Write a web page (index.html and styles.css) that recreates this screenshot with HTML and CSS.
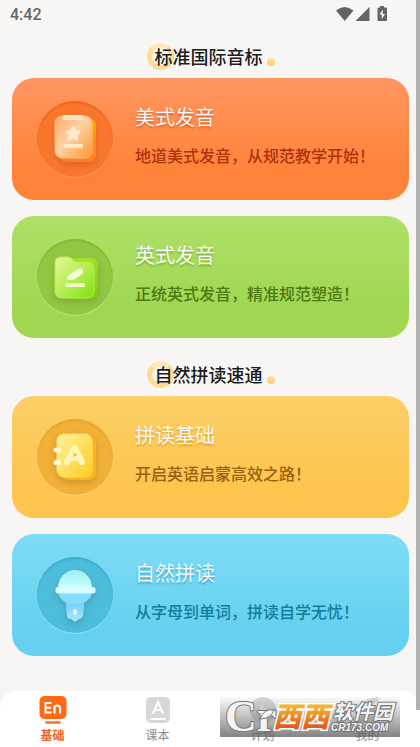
FILE: index.html
```html
<!DOCTYPE html>
<html lang="zh-CN">
<head>
<meta charset="utf-8">
<meta name="viewport" content="width=device-width, initial-scale=1">
<title>基础</title>
<link rel="stylesheet" href="styles.css">
</head>
<body>
<div class="app">
  <header class="status">
    <time>4:42</time>
    <svg class="status-icons" width="52" height="16" viewBox="0 0 52 16" fill="#646464" aria-hidden="true">
      <path d="M0 4.500Q8.500-2.500 17.500 4.500L8.700 15Z"/>
      <path d="M33.500 1V15H19.500Z"/>
      <path d="M44 0h4v1.500h2q1 0 1 1V14q0 1-1 1h-7.500q-1 0-1-1V2.500q0-1 1-1H44Z"/>
      <path d="M46.800 3.500l-3.300 5h2.200V13l3.500-5h-2.400Z" fill="#f7f6f4"/>
    </svg>
  </header>
  <main>
    <section>
      <h2><span class="heading">标准国际音标</span></h2>
      <div class="cards">
        <a class="card orange" href="#us">
          <span class="disc">
            <svg viewBox="0 0 76 76" aria-hidden="true">
              <defs>
                <linearGradient id="o1" x1="0" y1="0" x2="1" y2="1"><stop offset="0" stop-color="#ffa766"/><stop offset=".45" stop-color="#ffd2a3"/><stop offset="1" stop-color="#ff9433"/></linearGradient>
                <linearGradient id="o2" x1="0" y1="0" x2="0" y2="1"><stop offset="0" stop-color="#ffa800"/><stop offset="1" stop-color="#ff7c2c"/></linearGradient>
              </defs>
              <rect x="22" y="17" width="37" height="44" rx="7" fill="url(#o2)"/>
              <rect x="18" y="15" width="37" height="42" rx="7" fill="url(#o1)" stroke="#ffc078" stroke-width="1"/>
              <rect x="25" y="14" width="22" height="5" rx="2.500" fill="#ffe3c2"/>
              <path d="M36 26l2.100 4 4.400.8-3.100 3.300.7 4.400-4.100-2-4.100 2 .7-4.400-3.100-3.300 4.400-.8Z" fill="#ffebcc" stroke="#ffebcc" stroke-width="2" stroke-linejoin="round"/>
              <path d="M28 45h16" stroke="#ffebcc" stroke-width="4" stroke-linecap="round"/>
            </svg>
          </span>
          <span class="copy"><strong>美式发音</strong><span class="sub">地道美式发音，从规范教学开始！</span></span>
        </a>
        <a class="card green" href="#uk">
          <span class="disc">
            <svg viewBox="0 0 76 76" aria-hidden="true">
              <defs>
                <linearGradient id="g1" x1="0" y1="0" x2="1" y2="1"><stop offset="0" stop-color="#e5f59b"/><stop offset=".5" stop-color="#b8ee55"/><stop offset="1" stop-color="#80df12"/></linearGradient>
                <linearGradient id="g2" x1="0" y1="0" x2="0" y2="1"><stop offset="0" stop-color="#a7dd24"/><stop offset="1" stop-color="#70d013"/></linearGradient>
              </defs>
              <path d="M30 19h23q8 0 8 8v25q0 8-8 8H30q-8 0-8-8V27q0-8 8-8Z" fill="url(#g2)"/>
              <path d="M24 18h7c4 0 5 5 9 5h10q7 0 7 7v22q0 7-7 7H25q-7 0-7-7V24q0-6 6-6Z" fill="url(#g1)" stroke="#b4ef4b" stroke-width="1"/>
              <path d="M31 40l1-3 10-6.500q2-.5 3 1t-.5 3L36 40Z" fill="#f3fbd5" stroke="#f3fbd5" stroke-width="2" stroke-linejoin="round"/>
              <path d="M30 46h16" stroke="#effbc8" stroke-width="4" stroke-linecap="round"/>
            </svg>
          </span>
          <span class="copy"><strong>英式发音</strong><span class="sub">正统英式发音，精准规范塑造！</span></span>
        </a>
      </div>
    </section>
    <section>
      <h2><span class="heading">自然拼读速通</span></h2>
      <div class="cards">
        <a class="card yellow" href="#spell">
          <span class="disc">
            <svg viewBox="0 0 76 76" aria-hidden="true">
              <defs>
                <linearGradient id="y1" x1="0" y1="0" x2="1" y2="1"><stop offset="0" stop-color="#fff19a"/><stop offset=".5" stop-color="#ffe060"/><stop offset="1" stop-color="#ffcb1c"/></linearGradient>
              </defs>
              <rect x="24" y="18" width="35" height="43" rx="7" fill="#ffb11f"/>
              <rect x="20" y="15" width="35" height="43" rx="7" fill="url(#y1)" stroke="#ffe477" stroke-width="1"/>
              <path d="M30 43l7.500-14L45 43M34 39h7" fill="none" stroke="#fff8bd" stroke-width="6" stroke-linecap="round" stroke-linejoin="round"/>
              <path d="M36.500 33.500l4 2-4 3Z" fill="#f6c32c"/>
              <path d="M19 31h3M19 43.500h3" stroke="#fff6cf" stroke-width="5" stroke-linecap="round"/>
            </svg>
          </span>
          <span class="copy"><strong>拼读基础</strong><span class="sub">开启英语启蒙高效之路！</span></span>
        </a>
        <a class="card blue" href="#phonics">
          <span class="disc">
            <svg viewBox="0 0 76 76" aria-hidden="true">
              <defs>
                <linearGradient id="b1" x1="0" y1="0" x2="0" y2="1"><stop offset="0" stop-color="#a1eefb"/><stop offset="1" stop-color="#cafffb"/></linearGradient>
                <linearGradient id="b2" x1="0" y1="0" x2="0" y2="1"><stop offset="0" stop-color="#66c7f8"/><stop offset="1" stop-color="#a7e9ff"/></linearGradient>
              </defs>
              <path d="M28 40h20l-2 19q-1 3-4 3l-4 3-4-3q-4 0-4-3Z" fill="url(#b2)"/>
              <path d="M21 36h34q-3 11-17 11T21 36Z" fill="#84daff"/>
              <path d="M21 31a17 18 0 0 1 34 0Z" fill="url(#b1)"/>
              <rect x="18.500" y="30" width="40" height="6.500" rx="2.500" fill="#d7fbff"/>
              <rect x="36" y="52" width="4" height="6" rx="2" fill="#e5fcff"/>
            </svg>
          </span>
          <span class="copy"><strong>自然拼读</strong><span class="sub">从字母到单词，拼读自学无忧！</span></span>
        </a>
      </div>
    </section>
  </main>
  <nav class="tabs">
    <a class="tab active" href="#base">
      <svg width="28" height="28" viewBox="0 0 28 28" aria-hidden="true"><rect x=".5" width="27" height="23" rx="5" fill="#ff6a13"/><path d="M12.500 7H6.500v9.500h6M6.500 11.700h5.500M15.500 17.500V9.500M15.500 12q0-2.500 2.700-2.500T21 12v5.500" fill="none" stroke="#fff" stroke-width="2"/><path d="M7.500 26.500h13" stroke="#ea7434" stroke-width="2.500" stroke-linecap="round"/></svg>
      <span>基础</span>
    </a>
    <a class="tab" href="#book">
      <svg width="28" height="28" viewBox="0 0 28 28" aria-hidden="true"><rect x="2" y="1" width="24" height="26" rx="5" fill="#d8d7d6"/><path d="M9 17.500l5-11.500L19 17.500M10.500 14h7" fill="none" stroke="#fff" stroke-width="2"/><path d="M7 23h14" stroke="#fff" stroke-width="2" stroke-linecap="round"/></svg>
      <span>课本</span>
    </a>
    <a class="tab" href="#plan">
      <svg width="28" height="28" viewBox="0 0 28 28" aria-hidden="true"><circle cx="14" cy="14" r="13" fill="#d8d7d6"/><path d="M11 9l8 5-8 5Z" fill="#eee"/></svg>
      <span>计划</span>
    </a>
    <a class="tab" href="#me">
      <svg width="28" height="28" viewBox="0 0 28 28" aria-hidden="true"><path d="M2 27q0-12 3-17Q10 2 25 1q0 5-6 7 7 6 7 19Z" fill="#d8d7d6"/></svg>
      <span>我的</span>
    </a>
    <svg class="watermark" viewBox="0 0 180 40" role="img">
      <defs>
        <linearGradient id="wx" x1="0" y1="0" x2="0" y2="1"><stop offset=".3" stop-color="#f6b32c"/><stop offset=".8" stop-color="#e35b20"/></linearGradient>
      </defs>
      <text class="wm-cr" x="5" y="34">Cr</text>
      <path d="M40 22q4-11 14-9-3 9-14 9Z" fill="#f4f4f4" stroke="#777" stroke-width="1"/>
      <text class="wm-x" x="53" y="30">西西</text>
      <text class="wm-name" x="113" y="22">软件园</text>
      <text class="wm-url" x="111" y="34">CR173.COM</text>
    </svg>
  </nav>
  <div class="scrollbar"></div>
</div>
</body>
</html>
```
FILE: styles.css
```css
* { box-sizing: border-box; }
body {
  margin: 0;
  background: #f7f6f4;
  color: #1b1b1b;
  font-family: "Noto Sans CJK SC", "Noto Sans", sans-serif;
}
a { color: inherit; text-decoration: none; }
.app {
  position: relative;
  display: flex;
  flex-direction: column;
  min-height: 100vh;
}
.status {
  display: flex;
  justify-content: space-between;
  align-items: center;
  height: 30px;
  padding: 0 32px 0 10px;
  color: #646464;
  font: 500 16px/28px Roboto, sans-serif;
}
.status-icons { margin-bottom: 2px; }
main { flex: 1; padding: 0 11px 0 12px; }
h2 {
  margin: 14px 0 10px;
  padding-right: 4px;
  font-size: 18px;
  font-weight: 500;
  line-height: 24px;
  text-align: center;
}
section + section h2 { margin-top: 24px; }
.heading { position: relative; z-index: 0; }
.heading::before {
  content: "";
  position: absolute;
  z-index: -1;
  left: -8px;
  top: 0;
  width: 17px;
  height: 17px;
  border: 5px solid #fddc93;
  border-top-color: #fee8b8;
  border-radius: 50%;
}
.heading::after {
  content: "";
  position: absolute;
  right: -12px;
  bottom: 3px;
  width: 8px;
  height: 8px;
  border-radius: 50%;
  background: linear-gradient(#fee2a0, #fdc870);
}
.cards { display: grid; gap: 16px; }
.card {
  display: flex;
  align-items: center;
  gap: 22px;
  height: 122px;
  padding: 0 25px;
  border-radius: 22px;
}
.disc {
  flex: none;
  width: 76px;
  height: 76px;
  border-radius: 50%;
}
.disc svg { display: block; filter: drop-shadow(0 3px 3px rgba(80, 40, 0, .2)); }
.copy { display: flex; flex-direction: column; gap: 12px; padding-bottom: 8px; }
.copy strong {
  color: #fff;
  font-size: 20px;
  font-weight: 350;
  line-height: 28px;
}
.sub { font-size: 16px; font-weight: 500; line-height: 24px; white-space: nowrap; }
.orange { background: linear-gradient(#ff9661, #ff8238 80%); color: #ae330b; }
.orange .disc { background: #fb762d; box-shadow: inset 0 2px 2px #ed671f, 0 1px 1px #ff9d66; }
.orange strong { text-shadow: 0 2px 2px #d9652c; }
.green { background: linear-gradient(#afe068, #a0d650 80%); color: #4b7a12; }
.green .disc { background: #90c842; box-shadow: inset 0 2px 2px #83b936, 0 1px 1px #bce982; }
.green strong { text-shadow: 0 2px 2px #7eb236; }
.yellow { background: linear-gradient(#fbcf67, #fec44d 80%); color: #9b600d; }
.yellow .disc { background: #f1b038; box-shadow: inset 0 2px 2px #e6a52e, 0 1px 1px #ffd67f; }
.yellow strong { text-shadow: 0 2px 2px #d99d32; }
.blue { background: linear-gradient(#7edcf5, #66d0f0 80%); color: #127d99; }
.blue .disc { background: #4cbddb; box-shadow: inset 0 2px 2px #3eafcd, 0 1px 1px #8ae5f5; }
.blue strong { text-shadow: 0 2px 2px #3ea6c6; }
.tabs {
  position: relative;
  display: grid;
  grid-template-columns: repeat(4, 1fr);
  height: 56px;
  padding-top: 5px;
  border-radius: 16px 16px 0 0;
  background: #fff;
}
.tab {
  display: flex;
  flex-direction: column;
  align-items: center;
  gap: 3px;
  color: #8c8c8c;
  font-size: 12px;
  line-height: 16px;
}
.tab.active { color: #f0641e; font-weight: 700; }
.watermark {
  position: absolute;
  right: 20px;
  bottom: 10px;
  width: 180px;
  height: 40px;
  overflow: visible;
  background: linear-gradient(rgba(220, 220, 220, .1), rgba(90, 90, 90, .75));
}
.watermark text { paint-order: stroke; stroke: #777; stroke-width: 2px; fill: #f4f4f4; }
.wm-cr { font: 700 44px "Liberation Serif", serif; }
.watermark .wm-x {
  fill: url(#wx);
  stroke: #fff;
  stroke-width: 3px;
  font: italic 900 28px "Noto Sans CJK SC", sans-serif;
}
.wm-name { font: italic 700 20px "Noto Sans CJK SC", sans-serif; }
.wm-url { font: italic 700 10px "Liberation Sans", sans-serif; }
.scrollbar {
  position: absolute;
  top: 0;
  right: 0;
  width: 4px;
  height: 95%;
  background: #b1b1b1;
}
```
